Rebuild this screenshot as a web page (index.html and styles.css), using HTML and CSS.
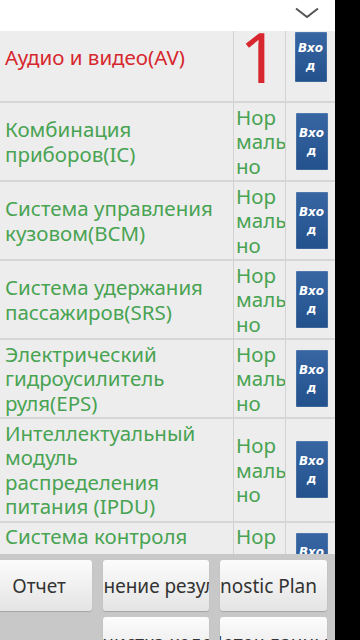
FILE: index.html
```html
<!DOCTYPE html>
<html lang="ru">
<head>
<meta charset="utf-8">
<title>Diagnostics</title>
<link rel="stylesheet" href="styles.css">
</head>
<body>
<div class="screen">
  <div class="app">
    <div class="topbar">
      <svg class="chevron" width="24" height="12" viewBox="0 0 24 12"><polyline points="1,1.5 12,10 23,1.5" fill="none" stroke="#555" stroke-width="2"/></svg>
    </div>
    <div class="list">
      <div class="row row-first">
        <div class="cell name red first-name">Аудио и видео(AV)</div>
        <div class="cell status big">1</div>
        <div class="cell action"><button class="enter short">Вход</button></div>
      </div>
      <div class="row">
        <div class="cell name green">Комбинация приборов(IC)</div>
        <div class="cell status green"><div class="word">Нормально</div></div>
        <div class="cell action"><button class="enter">Вход</button></div>
      </div>
      <div class="row">
        <div class="cell name green">Система управления кузовом(BCM)</div>
        <div class="cell status green"><div class="word">Нормально</div></div>
        <div class="cell action"><button class="enter">Вход</button></div>
      </div>
      <div class="row">
        <div class="cell name green">Система удержания пассажиров(SRS)</div>
        <div class="cell status green"><div class="word">Нормально</div></div>
        <div class="cell action"><button class="enter">Вход</button></div>
      </div>
      <div class="row">
        <div class="cell name green">Электрический гидроусилитель руля(EPS)</div>
        <div class="cell status green"><div class="word">Нормально</div></div>
        <div class="cell action"><button class="enter">Вход</button></div>
      </div>
      <div class="row">
        <div class="cell name green">Интеллектуальный модуль распределения питания (IPDU)</div>
        <div class="cell status green"><div class="word">Нормально</div></div>
        <div class="cell action"><button class="enter">Вход</button></div>
      </div>
      <div class="row">
        <div class="cell name green">Система контроля давления в шинах(TPMS)</div>
        <div class="cell status green"><div class="word">Нормально</div></div>
        <div class="cell action"><button class="enter">Вход</button></div>
      </div>
    </div>
    <div class="toolbar">
      <button class="tool"><span>Отчет</span></button>
      <button class="tool"><span>Сохранение результата</span></button>
      <button class="tool tool-end"><span>Diagnostic Plan</span></button>
      <div class="tool-gap"></div>
      <button class="tool"><span>Очистка кодов</span></button>
      <button class="tool"><span>Поток данных</span></button>
    </div>
  </div>
  <div class="edge"></div>
</div>
</body>
</html>
```

FILE: styles.css
```css
html, body {
  margin: 0;
  padding: 0;
  background: #000;
}

.screen {
  display: flex;
  width: 360px;
  height: 640px;
  overflow: hidden;
}

.app {
  width: 335px;
  height: 640px;
  flex: none;
  display: flex;
  flex-direction: column;
  background: #ededed;
  font-family: "Noto Sans", "Open Sans", sans-serif;
  overflow: hidden;
}

.edge {
  flex: 1;
  background: #000;
}

.topbar {
  height: 31px;
  flex: none;
  background: #fff;
  display: flex;
  justify-content: flex-end;
  align-items: flex-start;
  padding-right: 16px;
}

.chevron {
  margin-top: 7px;
}

.list {
  flex: 1;
  overflow: hidden;
}

.row {
  display: grid;
  grid-template-columns: 233px 52px 50px;
  border-bottom: 2px solid #d6d6d6;
  font-size: 20.5px;
  line-height: 24.5px;
}

.cell {
  display: flex;
  align-items: center;
  padding: 1.75px 0;
  box-sizing: border-box;
}

.name {
  padding-left: 5px;
  padding-right: 2px;
}

.status {
  border-left: 1px solid #d2d2d2;
  padding-left: 2px;
}

.word {
  width: 51.5px;
  flex: none;
  word-break: break-all;
}

.action {
  border-left: 1px solid #d2d2d2;
  justify-content: center;
  padding-left: 2px;
}

.green {
  color: #48a352;
}

.red {
  color: #d7262d;
}

.row-first {
  height: 70px;
  align-items: stretch;
}

.row-first .cell {
  align-items: flex-start;
  padding: 0;
}

.first-name {
  padding-top: 14px !important;
  padding-left: 5px !important;
}

.big {
  color: #d7262d;
  font-size: 70px;
  line-height: 50px;
  justify-content: center;
  padding-left: 0 !important;
}

.enter {
  width: 32px;
  height: 57px;
  padding: 0 2px;
  border: none;
  border-radius: 1px;
  background: linear-gradient(#3766a3, #23518c);
  box-shadow: inset 0 0 0 1px rgba(255, 255, 255, 0.12);
  color: #fff;
  font-family: "DejaVu Sans", sans-serif;
  font-size: 12px;
  font-weight: bold;
  font-style: oblique;
  line-height: 18px;
  word-break: break-all;
  text-align: center;
}

.enter.short {
  height: 50px;
  margin-top: 1px;
}

.toolbar {
  height: 86px;
  flex: none;
  box-sizing: border-box;
  background: #c8c8c8;
  padding-top: 6px;
  margin-left: -14px;
  display: grid;
  grid-template-columns: 106px 106px 107px;
  grid-auto-rows: 51px;
  column-gap: 11px;
  row-gap: 6px;
  overflow: hidden;
}

.tool {
  display: flex;
  align-items: center;
  justify-content: center;
  overflow: hidden;
  white-space: nowrap;
  padding: 0;
  border: none;
  border-radius: 3px;
  background: linear-gradient(#fcfcfc, #e4e4e4);
  box-shadow: 0 1px 1px rgba(0, 0, 0, 0.18);
  color: #333;
  font-family: "Noto Sans", sans-serif;
  font-size: 19px;
}

.tool span {
  flex: none;
}

.tool-end {
  justify-content: flex-end;
  padding-right: 10px;
}
```
